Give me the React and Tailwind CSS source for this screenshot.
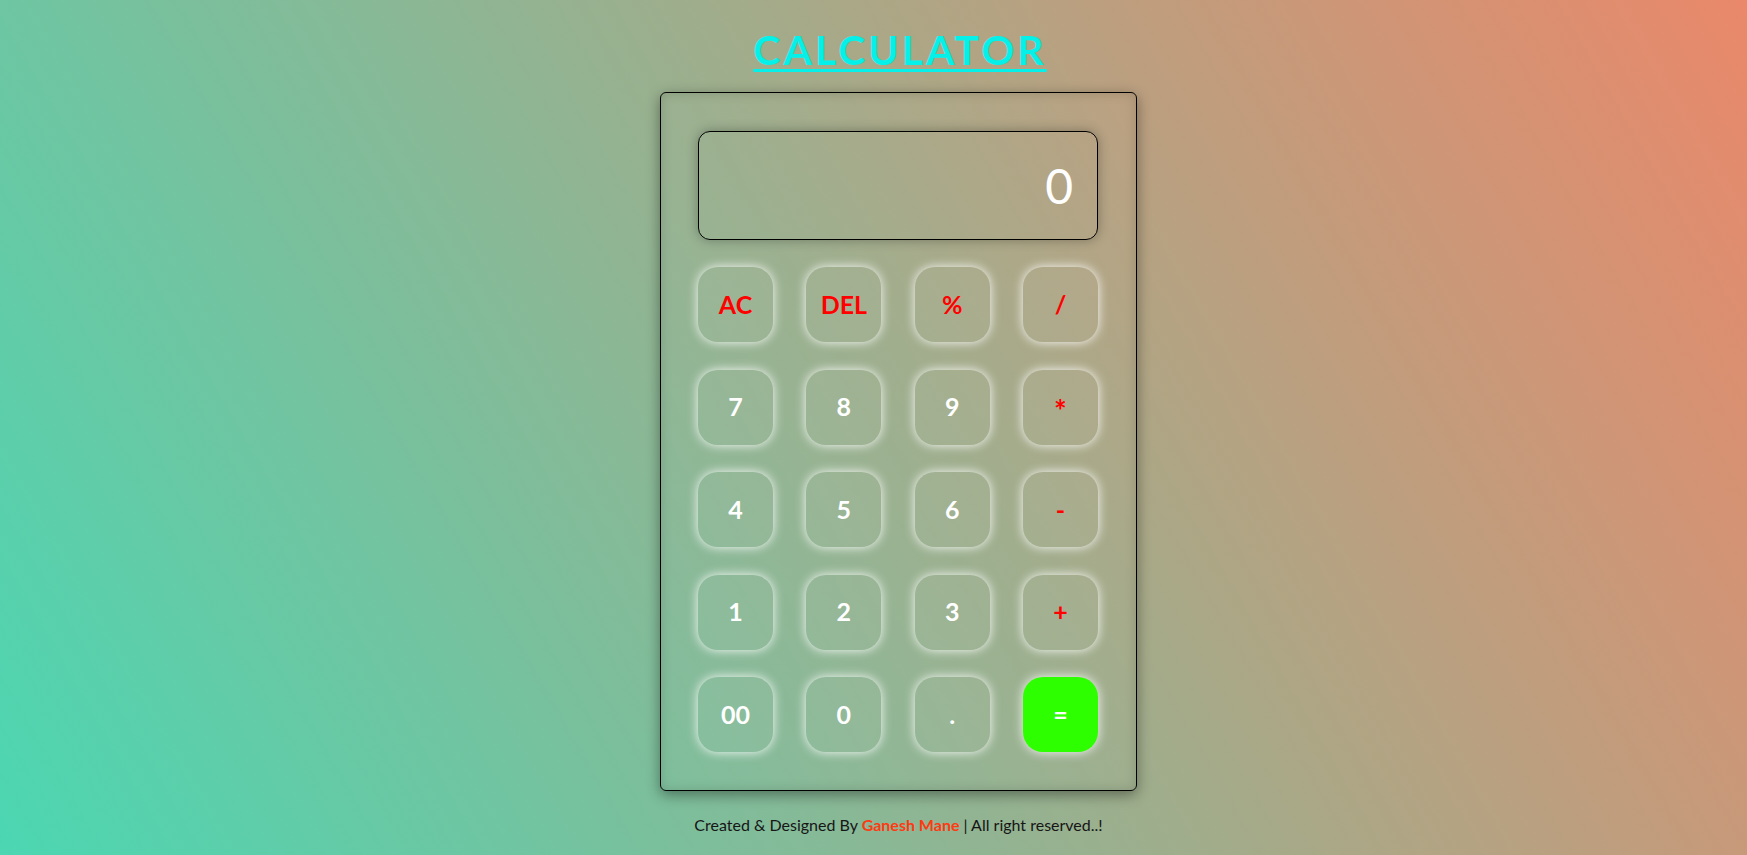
import React from "react";

const rows = [
  [["AC", "op"], ["DEL", "op"], ["%", "op"], ["/", "op"]],
  [["7"], ["8"], ["9"], ["*", "op"]],
  [["4"], ["5"], ["6"], ["-", "op"]],
  [["1"], ["2"], ["3"], ["+", "op"]],
  [["00"], ["0"], ["."], ["=", "eq"]],
];

function Key({ label, kind }) {
  const base =
    "w-[75px] h-[75px] rounded-[20px] flex items-center justify-center font-bold text-[25px] shadow-[0_0_11px_rgba(255,255,255,0.95)]";
  if (kind === "eq") {
    return <div className={base + " bg-[#2eff00] text-white"}>{label}</div>;
  }
  if (kind === "op") {
    return (
      <div className={base + " bg-white/[0.03] text-[#ff0000]"}>
        <span className={label === "*" ? "text-[30px] leading-none mt-[6px]" : ""}>{label}</span>
      </div>
    );
  }
  return <div className={base + " bg-white/[0.03] text-white"}>{label}</div>;
}

export default function App() {
  return (
    <div
      className="w-full h-[855px] overflow-hidden bg-[linear-gradient(60deg,#4bd7b2,#ea886a)] flex flex-col items-center pl-[50px] pt-[26px]"
      style={{ fontFamily: "Lato, 'Open Sans', sans-serif" }}
    >
      <h1 className="text-[41px] leading-[48px] font-bold text-[#04f0e8] underline decoration-[3px] underline-offset-[4px] tracking-[3px] pl-[3px]">
        CALCULATOR
      </h1>
      <div className="mt-[18px] w-[477px] h-[699px] border border-black rounded-[6px] bg-white/[0.02] shadow-[0_4px_14px_rgba(0,0,0,0.4),inset_0_0_12px_rgba(0,0,0,0.15)] pl-[37px] pr-[38px] pt-[38px] pb-[38px] flex flex-col">
        <div className="w-[400px] h-[109px] border border-black rounded-[12px] shadow-[0_0_12px_rgba(0,0,0,0.3)] flex items-center justify-end pr-[24px] text-white text-[48px]">
          0
        </div>
        <div className="mt-[27px] flex flex-col gap-y-[27.5px]">
          {rows.map((r, i) => (
            <div key={i} className="flex justify-between">
              {r.map(([l, k]) => (
                <Key key={l} label={l} kind={k} />
              ))}
            </div>
          ))}
        </div>
      </div>
      <p className="mt-[22px] text-[16px] leading-[24px] text-[#161616]">
        Created &amp; Designed By{" "}
        <span className="font-bold text-[#ff3a12]">Ganesh Mane</span> | All right reserved..!
      </p>
    </div>
  );
}
